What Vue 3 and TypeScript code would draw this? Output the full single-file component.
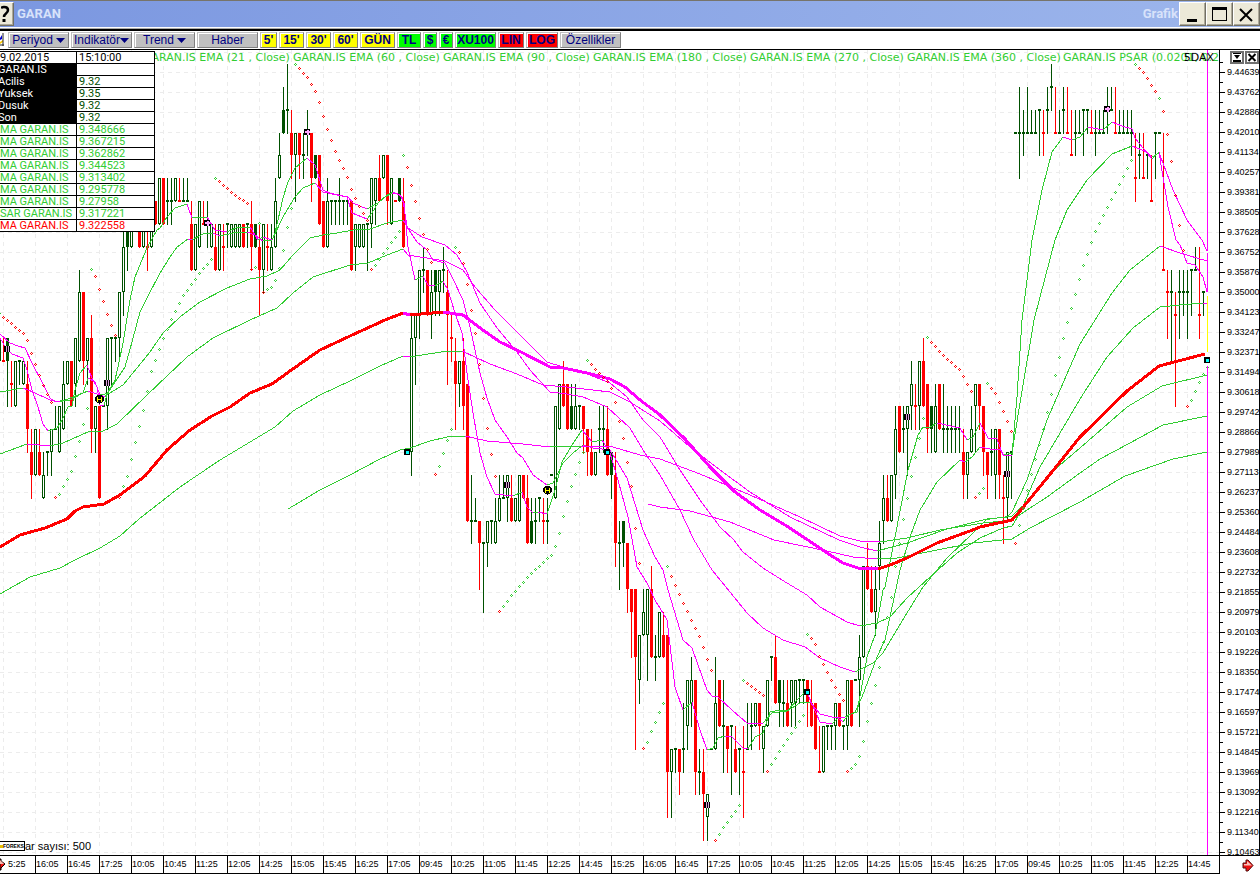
<script setup lang="ts">
type Pt = [number, number]
interface Candle { x: number; kind: string; high: number; top: number; bottom: number; low: number }
interface Dot { x: number; y: number; up: boolean }

const priceY = (p: number): number => Math.round(132.6 + (42 - p) * 22.82)

// Each token is a candle: kind, then high/top/bottom/low (8 digits) or high/close/low (6 digits).
// g hollow, G filled, r falling, d flat rising, e flat falling, "-" empty slot.
const candleData = `
g33333232 e333232 G33333230 e323130 g32323030 d323231 g32323131 r32312928 r29282726 g29292727 r29282727 g28272626
d282827 g29292827 d302929 g30302828 g32312929 g32323131 r32323030 g33333130 g36353232 r35353231 g33333231 r34332928
g30302928 r30302626 d303030 g33333029 d333331 d333332 g35353332 g38373534 G38383736 g38383737 d383838 r38383737
g38383737 e383736 g38383737 r39393838 g40403838 r40403838 d403938 d403938 g40403939 e403939 d403939 d403939
r39383636 g38383636 g39393737 e393838 d393837 g38383737 r38373636 g38383636 e383736 d383837 g38383737 g38383737
g38383737 r38383737 d383837 r39383736 G38383737 r38373634 g38383635 e383736 g38373636 g40393737 g42414040 G44434242
d454342 r43424140 g42424139 r42424140 d424140 d434241 r42424039 G41414040 r41413838 r39393737 g40393737 d393938
d393938 d403938 d393938 d393938 r39393636 g38383736 g38383737 g38383737 d383836 g40403837 g40403938 r41403939
g41414040 r41413938 g40403838 e393939 G40403939 r40393737 - g34332827 g34343331 g36363433 d373635 r36363434
g36353433 G36363534 g36363534 d373635 r36353431 e343332 r33323129 g32323130 r33323029 r31312525 d272524 d262525
r25252422 d242421 g25252423 d252524 g26252424 g27262525 d272626 g27272625 r27262525 g26262525 g27272525 r27272626
r27262424 G26252424 d262524 d262625 e262524 d262524 d272727 g30302626 g31312929 r32313030 r31312929 G31302929
g31302929 d303029 r30302928 r29292827 r29282727 g28282727 d302928 d302928 r30292727 G28282726 r28272423 d252422
G25252423 r24242221 r22222119 r22221915 g20201817 g22212020 g22222018 r23221919 d201918 g21211919 r21201919 r20201412
g15151412 d151514 r15151413 d171514 g18181615 g19181716 r18181413 d151413 r15141311 g13131211 d151515 g19171515
r18181616 d181614 r16161514 d161613 r16151414 d151513 e161412 d171515 d171615 g17171616 r17171615 g16161514
g18181616 d191918 r20191717 G18181716 d181716 r18171616 g18181716 g18181716 d181817 d181817 r18181716 r18171616
r17171515 e161414 g16161414 d161615 d161615 g17171615 r17171616 d161615 g18181615 r18181616 d181818 g20191816
g23231919 r24232222 r23222121 g23222120 g25242322 g27262524 r27262525 g27272525 g30292726 r30302828 d302928 g30302927
g32313029 e313029 g32323029 r33323030 r31312928 G30302928 g31302828 r31312929 d312928 d302928 d302928 d302928
d302928 r29282726 g28282726 g30292828 g31313028 r31313029 r30302827 r28282726 d292827 g29292726 r29292726 e272624
g28282625 d282826 d424242 d444240 d434241 d444242 d434242 d434242 d434341 e434241 d444342 d454443 e444242 d434242
d444342 e444242 e434141 d434241 d434242 d434341 d434342 e434242 d434241 d434242 d434242 d444342 d444343 e444242
d434242 d434242 d434242 d434241 e424039 d424140 e424040 d414140 e413939 d424240 d424242 e423636 e363533 d363532
e353430 d363533 d363534 d363533 d363634 d373636 e373433 d353534`

const candles: Candle[] = candleData.trim().split(/\s+/).flatMap((t, i) => {
  if (t === '-') return []
  const n = (t.slice(1).match(/\d\d/g) ?? []).map(Number)
  const flat = n.length === 3
  return [{
    x: 4 * i - 1, kind: t[0],
    high: priceY(n[0]), top: priceY(n[1]),
    bottom: priceY(flat ? n[1] : n[2]), low: priceY(flat ? n[2] : n[3]),
  }]
})

const parse = (s: string): Pt[] => s.trim().split(/\s+/).map(p => p.split(',').map(Number) as Pt)

const averages: string[] = [
  // 8
  `0,338 6,348 12,354 23,358 27,370 32,390 38,407 43,424 48,431 57,428 62,420 68,407 72,406 75,390 80,373 87,365 92,378 97,387 100,405 104,405 108,392 115,380 118,367 123,343 130,300 135,277 142,260 147,248 157,230 160,228 167,217 175,208 187,204 192,218 207,217 215,230 227,232 238,227 250,227 258,240 263,237 272,240 275,233 283,198 288,182 295,168 307,158 315,165 323,190 330,193 347,197 352,213 367,219 372,213 378,203 387,195 393,192 400,195 404,203 408,247 415,280 423,276 428,285 435,286 443,281 448,290 455,313 462,333 467,373 473,413 480,453 487,477 495,494 513,496 522,492 527,507 533,513 538,512 547,514 555,490 562,462 572,445 582,430 592,442 602,440 610,453 618,480 628,517 637,567 647,583 656,602 660,608 667,620 675,687 683,710 692,702 700,730 707,750 713,748 718,738 725,736 732,737 743,748 748,749 755,737 763,733 770,712 780,710 788,710 797,700 804,693 808,695 820,722 832,724 838,718 843,722 848,715 857,712 863,680 867,657 875,635 883,590 885,587 895,537 908,470 918,435 923,427 930,427 937,423 960,428 967,440 973,437 980,423 988,438 997,439 1003,455 1012,455 1017,397 1022,320 1032,240 1042,190 1052,152 1063,137 1072,140 1080,137 1088,127 1103,130 1112,122 1122,126 1132,129 1135,138 1143,148 1152,159 1159,152 1163,177 1168,207 1176,240 1180,245 1187,263 1195,265 1203,277 1207,292`,
  // 21
  `0,334 10,343 18,346 25,348 33,365 42,382 50,398 55,402 60,401 70,400 83,393 88,378 95,382 100,395 105,397 113,385 125,367 132,342 140,312 147,298 160,273 170,257 177,247 188,239 192,240 203,234 213,233 220,236 233,233 247,232 255,235 263,241 272,240 283,217 295,197 303,188 315,183 323,192 337,195 348,197 353,203 367,209 378,203 385,197 392,193 397,194 402,197 404,207 407,227 417,242 427,250 433,260 445,263 452,277 463,300 470,327 480,373 487,398 495,420 507,437 517,453 523,458 533,475 547,485 553,483 563,463 573,453 583,445 593,448 610,450 627,478 643,530 655,557 663,570 668,590 683,640 692,648 707,690 712,696 718,697 733,711 747,723 763,723 772,713 787,711 800,703 810,702 820,714 832,717 845,717 855,712 862,697 877,657 885,640 900,570 910,537 920,510 937,482 960,460 965,462 972,457 980,447 990,449 1000,450 1004,455 1012,453 1020,403 1034,320 1055,240 1067,210 1087,180 1112,154 1132,146 1147,152 1152,157 1159,153 1163,163 1173,190 1187,220 1202,240 1207,251`,
  // 60
  `0,392 23,388 33,392 50,400 60,402 73,397 88,391 100,395 110,393 123,385 137,368 150,352 163,333 180,317 200,302 227,288 250,279 267,276 280,270 293,255 310,238 323,235 337,233 353,230 370,229 387,223 403,220 408,228 422,237 445,245 457,255 467,272 480,303 497,328 517,352 530,370 550,392 567,394 583,397 607,407 630,428 643,450 660,475 680,510 694,540 712,570 730,592 747,613 763,628 783,640 805,647 820,658 840,667 855,672 873,663 883,653 907,613 923,587 947,558 973,533 987,519 1007,517 1012,512 1027,480 1047,420 1080,344 1112,293 1130,270 1160,246 1180,253 1207,261`,
  // 90
  `0,454 27,444 50,446 63,443 90,431 103,431 117,424 147,395 187,357 213,338 250,320 277,308 293,293 313,277 350,265 368,263 387,255 403,249 408,255 445,261 463,270 475,287 495,310 523,338 547,362 563,367 580,371 610,383 627,397 643,420 660,437 680,470 700,500 720,527 734,540 743,552 763,568 782,580 807,595 820,607 847,622 860,626 877,623 890,617 907,598 930,577 957,553 980,538 1003,528 1012,526 1020,513 1040,467 1060,433 1080,399 1107,357 1133,328 1160,307 1180,305 1203,303 1207,304`,
  // 180
  `0,594 30,577 60,568 75,560 100,548 120,536 139,519 180,487 220,460 250,442 275,427 293,411 320,395 350,381 380,366 403,356 410,357 447,351 462,351 490,364 517,374 543,385 567,387 610,392 630,402 660,421 690,447 720,470 750,492 790,517 839,540 860,547 877,551 907,543 947,529 983,520 1012,516 1027,502 1047,478 1060,465 1080,448 1127,407 1162,386 1207,375`,
  // 270
  `288,509 320,490 350,475 380,459 400,450 410,448 430,441 447,437 465,436 487,441 523,444 550,447 580,446 613,447 640,455 660,459 700,474 750,495 800,517 840,536 860,541 880,542 907,538 940,530 983,523 1012,520 1027,510 1047,497 1080,473 1100,459 1130,443 1163,425 1207,416`,
  // 360
  `648,504 660,507 690,511 730,522 774,540 827,551 853,557 877,559 897,558 927,552 973,543 1012,539 1030,528 1080,502 1125,476 1173,459 1207,452`,
]
const thickAverage = `0,547 20,535 45,528 67,519 75,511 83,507 104,504 120,495 145,476 167,450 190,430 212,416 230,407 250,393 272,384 290,371 320,350 350,336 385,320 403,313 410,315 443,312 463,315 480,328 500,342 523,353 550,367 563,368 587,373 610,379 625,387 640,400 660,415 685,439 710,467 735,492 760,510 785,525 808,540 827,553 843,563 858,568 878,569 890,565 907,558 937,543 970,531 980,527 1012,520 1020,511 1047,478 1080,437 1127,391 1159,366 1205,354`

interface Stroke { d: string; up: boolean }
const strokesOf = (pts: Pt[]): Stroke[] => {
  const out: Stroke[] = []
  for (let i = 1; i < pts.length; i++) {
    const a = pts[i - 1], b = pts[i]
    const last = out[out.length - 1]
    const up = b[1] === a[1] && last ? last.up : b[1] <= a[1]
    if (last && last.up === up) last.d += ` L${b[0]} ${b[1]}`
    else out.push({ up, d: `M${a[0]} ${a[1]} L${b[0]} ${b[1]}` })
  }
  return out
}
const thin: Stroke[] = averages.flatMap(s => strokesOf(parse(s)))
const thick: Stroke[] = strokesOf(parse(thickAverage))

// Parabolic SAR runs; "U" runs above the price, "L" runs below it.
const sarRuns: string[] = [
  'U -1,313 3,317 23,333 27,340 31,353 39,375 47,394 51,402',
  'L 55,497 59,494 71,471 79,441 83,424 87,408',
  'U 91,269 95,276 107,314 115,335',
  'L 119,497 123,486 127,476 135,442 143,410 151,371 163,338 171,319 183,295 203,268 211,259',
  'U 215,178 219,181 235,195 247,203',
  'L 251,269 255,267',
  'U 259,223',
  'L 263,292 267,289 271,287 275,280 279,268 283,250 287,227 291,208',
  'U 295,64 307,77 315,91 319,102 327,129 335,151 347,177 351,189 359,206 367,220',
  'L 371,269 375,265 383,253 391,242 399,231',
  'U 403,155 407,167 411,185 423,234 427,249 431,262',
  'L 435,474 439,466 443,453 447,440 451,429',
  'U 455,247 459,252 463,263 467,284 471,310 475,333 479,364 483,398 487,428 491,454 495,476',
  'L 499,611 503,606 511,595 527,577 547,558 551,555 555,546 559,533 563,516 571,486 579,462 583,452',
  'U 587,360 599,373 607,381 611,388 615,402 619,421 623,438 631,486 635,528 639,563',
  'L 643,748 647,742 651,731 659,712 663,703',
  'U 667,566 671,576 675,585 683,603 699,636 711,670',
  'L 715,840 723,827 739,805',
  'U 743,680 763,695',
  'L 767,771 779,751 803,715',
  'U 807,634 811,638 815,644 819,656 831,680 839,694 843,700',
  'L 847,771 855,764 859,756 863,741 867,721 871,703 879,667 887,617 891,597 895,566 903,519 911,476 919,438 923,418',
  'U 927,337 931,342 943,355 959,369 971,391',
  'L 975,497 979,493 983,488',
  'U 987,383 995,393 1003,411 1011,431',
  'L 1015,543 1019,525 1027,490 1031,474 1043,429 1051,394 1063,338 1067,322 1083,265 1095,231 1131,160',
  'U 1135,64 1143,72 1155,91 1159,98 1163,111 1167,134 1171,161 1175,195 1179,225 1183,250',
  'L 1187,406 1191,400 1199,382 1203,374 1207,367',
]
const dots: Dot[] = sarRuns.flatMap(run => {
  const upper = run[0] === 'U'
  const pts = parse(run.slice(2))
  const out: Dot[] = [{ x: pts[0][0], y: pts[0][1], up: upper }]
  for (let i = 1; i < pts.length; i++) {
    const [ax, ay] = pts[i - 1], [bx, by] = pts[i]
    for (let x = ax + 4; x <= bx; x += 4) {
      out.push({ x, y: Math.round(ay + ((by - ay) * (x - ax)) / (bx - ax)), up: !upper || x === 1159 })
    }
  }
  return out
})

const crossMarks: Pt[] = [[207, 223], [307, 132], [1107, 109]]
const barMarks: Pt[] = [[7, 349], [107, 383], [507, 485], [707, 805], [907, 417], [1007, 474]]
const cyanMarks: Pt[] = [[407, 452], [607, 452], [807, 692], [1207, 360]]
const holdMarks: Pt[] = [[99, 399], [547, 490]]

const gridX: number[] = Array.from({ length: 38 }, (_, i) => 3 + 32 * i)
const gridY: number[] = Array.from({ length: 41 }, (_, i) => 52 + 20 * i)

const prices: string[] = ('9.44639 9.43762 9.42886 9.42010 9.41134 9.40257 9.39381 9.38505 9.37628 9.36752 9.35876 9.35000 9.34123 ' +
  '9.33247 9.32371 9.31494 9.30618 9.29742 9.28866 9.27989 9.27113 9.26237 9.25360 9.24484 9.23608 9.22732 9.21855 9.20979 ' +
  '9.20103 9.19226 9.18350 9.17474 9.16597 9.15721 9.14845 9.13969 9.13092 9.12216 9.11340 9.10463').split(' ')
const times: string[] = ('5:25 16:05 16:45 17:25 10:05 10:45 11:25 12:05 14:25 15:05 15:45 16:25 17:05 09:45 10:25 11:05 11:45 12:25 ' +
  '14:45 15:25 16:05 16:45 17:25 10:05 10:45 11:25 12:05 14:25 15:05 15:45 16:25 17:05 09:45 10:25 11:05 11:45 12:25 14:45').split(' ')

const legend: string[] = ['GARAN.IS EMA (21 , Close)', 'GARAN.IS EMA (60 , Close)', 'GARAN.IS EMA (90 , Close)',
  'GARAN.IS EMA (180 , Close)', 'GARAN.IS EMA (270 , Close)', 'GARAN.IS EMA (360 , Close)', 'GARAN.IS PSAR (0.0201, 0.2']

const rows: { name: string; value: string; tone: string }[] = [
  { name: '9.02.2015', value: '15:10:00', tone: 'plain' },
  { name: 'GARAN.IS', value: '', tone: 'price' },
  { name: 'Acilis', value: '9.32', tone: 'price' },
  { name: 'Yuksek', value: '9.35', tone: 'price' },
  { name: 'Dusuk', value: '9.32', tone: 'price' },
  { name: 'Son', value: '9.32', tone: 'price' },
  { name: 'MA GARAN.IS', value: '9.348666', tone: 'lime' },
  { name: 'MA GARAN.IS', value: '9.367215', tone: 'lime' },
  { name: 'MA GARAN.IS', value: '9.362862', tone: 'lime' },
  { name: 'MA GARAN.IS', value: '9.344523', tone: 'lime' },
  { name: 'MA GARAN.IS', value: '9.313402', tone: 'lime' },
  { name: 'MA GARAN.IS', value: '9.295778', tone: 'lime' },
  { name: 'MA GARAN.IS', value: '9.27958', tone: 'lime' },
  { name: 'SAR GARAN.IS', value: '9.317221', tone: 'lime' },
  { name: 'MA GARAN.IS', value: '9.322558', tone: 'red' },
]

const tools: { label: string; cls: string; menu?: boolean }[] = [
  { label: 'Periyod', cls: 'wide', menu: true },
  { label: 'Indikatör', cls: 'wide tight', menu: true },
  { label: 'Trend', cls: 'wide', menu: true },
  { label: 'Haber', cls: 'wide' },
  { label: "5'", cls: 'yellow w17' },
  { label: "15'", cls: 'yellow w25' },
  { label: "30'", cls: 'yellow w25' },
  { label: "60'", cls: 'yellow w25' },
  { label: 'GÜN', cls: 'yellow w35' },
  { label: 'TL', cls: 'green w24' },
  { label: '$', cls: 'green w14' },
  { label: '€', cls: 'green w14' },
  { label: 'XU100', cls: 'green w41' },
  { label: 'LIN', cls: 'red w26' },
  { label: 'LOG', cls: 'red w32' },
  { label: 'Özellikler', cls: 'wide' },
]
</script>

<template>
  <div class="window">
    <header class="titlebar">
      <button class="winbtn help" aria-label="Yardım">
        <svg width="12" height="20" viewBox="0 0 12 20"><path d="M0 4q1-1 3-1 4 0 4 3 0 2-2 3.500T3 13" fill="none" stroke="#000" stroke-width="2.500" /><path d="M1.500 15h3v3h-3z" /></svg>
      </button>
      <h1>GARAN</h1>
      <span class="kind">Grafik</span>
      <button class="winbtn" aria-label="Küçült">
        <svg width="22" height="20" viewBox="0 0 22 20"><path d="M5 15h10v3H5z" /></svg>
      </button>
      <button class="winbtn" aria-label="Büyüt">
        <svg width="22" height="20" viewBox="0 0 22 20"><path d="M3 3h15v14H3zM4 6v10h13V6z" fill-rule="evenodd" /></svg>
      </button>
      <button class="winbtn" aria-label="Kapat">
        <svg width="22" height="20" viewBox="0 0 22 20"><path d="M4 5l12 12M16 5L4 17" stroke="#000" stroke-width="2" /></svg>
      </button>
    </header>

    <nav class="toolbar">
      <svg class="charticon" width="4" height="14" viewBox="0 0 4 14"><path d="M0 0h3v11H0z" fill="#fff" /><path d="M0 5l2-3v4L0 7z" fill="#00c" /><path d="M0 9l3-2v2l-3 2z" fill="#fc0" /><path d="M0 12h4M3 0v13" stroke="#222" /></svg>
      <button v-for="t in tools" :key="t.label" class="tool" :class="t.cls">
        <span>{{ t.label }}</span>
        <svg v-if="t.menu" width="9" height="5" viewBox="0 0 9 5"><path d="M0 0h9L4.500 5z" fill="#000080" /></svg>
      </button>
    </nav>

    <main class="board">
      <section class="plot">
        <svg class="canvas" viewBox="0 50 1219 805" preserveAspectRatio="none" role="img" aria-label="GARAN fiyat grafiği">
          <g stroke="#ececec" stroke-dasharray="4 4">
            <line v-for="x in gridX" :key="'v' + x" :x1="x + 0.5" :x2="x + 0.5" y1="50" y2="855" />
            <line v-for="y in gridY" :key="'h' + y" x1="0" x2="1219" :y1="y + 0.5" :y2="y + 0.5" />
          </g>
          <g v-for="c in candles" :key="c.x" :class="'c-' + c.kind">
            <rect :x="c.x" :y="c.high" width="1" :height="c.low - c.high + 1" />
            <rect v-if="c.kind === 'g'" class="hollow" :x="c.x - 0.5" :y="c.top + 0.5" width="2" :height="c.bottom - c.top - 1" />
            <rect v-else :x="c.x - 1" :y="c.top - (c.kind === 'd' || c.kind === 'e' ? 1 : 0)" width="3" :height="Math.max(c.bottom - c.top, 2)" />
          </g>
          <path v-for="(s, i) in thin" :key="'t' + i" :d="s.d" fill="none" :stroke="s.up ? '#32cd32' : '#ff00ff'" />
          <path v-for="(s, i) in thick" :key="'k' + i" :d="s.d" fill="none" stroke-width="3" :stroke="s.up ? '#ff0000' : '#ff00ff'" />
          <path v-for="(d, i) in dots" :key="'d' + i" :d="`M${d.x} ${d.y - 1}h1v1h1v1h-1v1h-1v-1h-1v-1h1z M${d.x} ${d.y}v1h1v-1z`" fill-rule="evenodd" :fill="d.up ? '#32cd32' : '#ff0000'" />
          <path d="M1207.500 50V251M1207.500 253V292M1207.500 366V855" stroke="#ff00ff" />
          <path d="M1207.500 296V352" stroke="#ffff00" />
          <g v-for="[x, y] in crossMarks" :key="'a' + x">
            <rect :x="x - 3" :y="y - 3" width="6" height="6" />
            <path :d="`M${x - 2} ${y}h5M${x + 0.5} ${y - 2}v5`" stroke="#ffa6ff" stroke-width="2" />
          </g>
          <g v-for="[x, y] in barMarks" :key="'b' + x">
            <rect :x="x - 3" :y="y - 3" width="6" height="6" />
            <path :d="`M${x - 0.5} ${y - 3}v6M${x + 1.5} ${y - 3}v6`" stroke="#dda0dd" />
          </g>
          <g v-for="[x, y] in cyanMarks" :key="'c' + x">
            <rect :x="x - 3" :y="y - 3" width="6" height="6" />
            <rect :x="x - 1" :y="y - 1" width="3" height="3" fill="#00ffff" />
          </g>
          <g v-for="[x, y] in holdMarks" :key="'h' + x">
            <circle :cx="x + 0.5" :cy="y" r="4.500" />
            <path :d="`M${x - 1.5} ${y - 2}v5M${x + 2.5} ${y - 2}v5M${x - 1} ${y + 0.5}h3`" stroke="#ffff00" />
          </g>
        </svg>

        <ul class="legend"><li v-for="l in legend" :key="l">{{ l }}</li></ul>
        <span class="overlap">5DAX</span>

        <table class="values">
          <tbody>
            <tr v-for="(r, i) in rows" :key="i" :class="r.tone">
              <th scope="row">{{ r.name }}</th>
              <td>{{ r.value }}</td>
            </tr>
          </tbody>
        </table>

        <div class="status">
          <span class="brand"><i></i>FOREKS</span>
          <span>ar sayısı: 500</span>
        </div>
      </section>

      <aside class="prices">
        <ol><li v-for="p in prices" :key="p">{{ p }}</li></ol>
        <div class="panebtns">
          <button aria-label="Daralt"><svg width="10" height="9" viewBox="0 0 10 9"><path d="M1 0h8v1H1zM2 2h6L5 6zM1 7h8v2H1z" /></svg></button>
          <button aria-label="Kapat"><svg width="10" height="9" viewBox="0 0 10 9"><path d="M1.500 1l7 7M8.500 1l-7 7" stroke="#000" stroke-width="2" /></svg></button>
        </div>
      </aside>

      <ol class="times">
        <li v-for="(t, i) in times" :key="i">{{ t }}</li>
      </ol>
      <svg class="arrow left" width="6" height="13" viewBox="0 0 6 13"><path d="M0 1h1v2l4 3-4 4v2H0z" fill="#f01010" stroke="#000" /><path d="M0 2l4 4H0z" fill="#f9b8b0" /></svg>
      <div class="corner">
        <svg width="12" height="13" viewBox="0 0 12 13"><path d="M1 4h3V1h2l5 5.500L6 12H4V9H1z" fill="#f01010" stroke="#501010" /><path d="M2 5h3V2l5 4.500H2z" fill="#f9c0b8" /></svg>
      </div>
    </main>
  </div>
</template>

<style>
body { margin: 0; background: #fff; }
</style>

<style scoped>
.window {
  display: flex; flex-direction: column; height: 100vh; min-height: 400px; overflow: hidden;
  font-family: "Liberation Sans", Arial, sans-serif; font-size: 11px; color: #000; background: #fff;
}
button { font-family: inherit; padding: 0; margin: 0; }
ul, ol { list-style: none; margin: 0; padding: 0; }

.titlebar {
  display: flex; align-items: center; flex: none; height: 26px; box-sizing: content-box;
  border-top: 1px solid #77746a; border-bottom: 1px solid #fff;
  background: linear-gradient(90deg, #7b97e0, #9db6ec);
}
h1, .kind { font-family: Roboto, sans-serif; font-size: 13px; font-weight: 700; line-height: 16px; color: #d8e2fa; margin: 0; }
h1 { padding-left: 3px; flex: 1; }
.kind { padding-right: 1px; }
.winbtn {
  width: 27px; height: 24px; box-sizing: border-box; display: flex; align-items: center; justify-content: center;
  background: #ece9d8; border: 1px solid; border-color: #fff #716f64 #716f64 #fff; box-shadow: inset -1px -1px #aca899; overflow: hidden;
}
.winbtn.help { width: 14px; border-left: 0; }
.winbtn svg { flex: none; }

.toolbar {
  display: flex; align-items: center; flex: none; gap: 2px; height: 18px; margin-top: 1px;
  border-top: 2px solid #000; border-bottom: 1px solid #000; background: #fff; box-shadow: 0 -1px #aaa;
}
.charticon { flex: none; margin-right: 2px; }
.tool {
  display: flex; align-items: center; justify-content: center; gap: 3px; box-sizing: border-box; height: 16px;
  border: 1px solid; border-color: #c0c0c0 #808080 #808080 #c0c0c0; box-shadow: inset 1px 1px #fff;
  background: #c0c0c0; color: #000080; font-size: 12px; line-height: 14px; overflow: hidden; white-space: nowrap;
}
.tool svg { flex: none; }
.wide { width: 61px; }
.tight { gap: 0; }
.yellow, .green, .red.tool { font-weight: 700; }
.yellow { background: #ffff00; }
.green { background: #00ff00; }
.red.tool { background: #ff0000; }
.w14 { width: 14px; } .w17 { width: 17px; } .w24 { width: 24px; } .w25 { width: 25px; }
.w26 { width: 26px; } .w32 { width: 32px; } .w35 { width: 35px; } .w41 { width: 41px; }

.board { position: relative; flex: 1; min-height: 0; display: grid; grid-template-columns: minmax(0, 1fr) 41px; grid-template-rows: minmax(0, 1fr) 19px; }
.plot { position: relative; overflow: hidden; }
.canvas { display: block; width: 100%; height: 100%; shape-rendering: crispEdges; }
.c-g rect, .c-G rect, .c-d rect { fill: #005000; }
.c-r rect, .c-e rect { fill: #ff0000; }
.c-g rect.hollow { fill: #fff; stroke: #005000; }

.legend {
  position: absolute; top: 1px; left: 143px; display: grid; grid-template-columns: 150px 150px 150px 157px 157px 156px 157px;
  font-family: "DejaVu Sans", sans-serif; font-size: 11px; line-height: 13px; color: #32cd32; white-space: nowrap;
}
.overlap { position: absolute; top: 1px; right: 5px; font-family: "DejaVu Sans", sans-serif; font-size: 11px; line-height: 13px; }

.values { position: absolute; top: 1px; left: 0; width: 155px; table-layout: fixed; border-collapse: collapse; background: #fff; }
.values th, .values td { height: 11px; padding: 0; border: 1px solid #000; font-family: Roboto, sans-serif; line-height: 11px; font-size: 11px; font-weight: 400; text-align: left; white-space: nowrap; overflow: hidden; }
.values th { width: 76px; border-left: 0; }
.values td { padding-left: 2px; }
.price th { background: #000; color: #fff; text-indent: -2px; }
.price td { color: #005000; }
.lime { color: #32cd32; }
tr.red { color: #ff0000; }

.status { position: absolute; left: 0; bottom: 3px; display: flex; align-items: center; line-height: 12px; }
.brand { display: flex; align-items: center; box-sizing: border-box; width: 25px; height: 10px; border: 1px solid #000; border-left: 0; background: #fff; font-size: 5px; font-weight: 700; line-height: 8px; overflow: hidden; }
.brand i { width: 3px; height: 3px; background: #e8c000; }

.prices { position: relative; overflow: hidden; border-left: 1px solid #000; border-right: 1px solid #000; }
.prices ol { display: flex; flex-direction: column; box-sizing: border-box; height: calc(100% + 7px); padding-top: 12px; }
.prices li {
  position: relative; flex: 1; display: flex; align-items: center; min-height: 0; padding-left: 7px;
  font-size: 9px; line-height: 12px;
}
.prices li::before { content: ""; position: absolute; left: 0; top: 50%; width: 5px; height: 1px; background: #000; }
.prices li::after { content: ""; position: absolute; left: 0; top: 0; width: 3px; height: 1px; background: #000; }
.panebtns { position: absolute; top: 1px; right: 0; display: flex; gap: 1px; background: #fff; }
.panebtns button { width: 14px; height: 13px; box-sizing: border-box; display: flex; align-items: center; justify-content: center; border: 2px solid #707070; background: #fff; }
.panebtns svg { flex: none; }

.times { display: grid; grid-template-columns: minmax(0, 35fr) repeat(37, minmax(0, 32fr)); box-sizing: border-box; border: solid #000; border-width: 1px 0; box-shadow: 1px 0 #000; }
.times li { box-sizing: border-box; border-left: 1px solid #000; line-height: 17px; font-size: 9px; white-space: nowrap; overflow: hidden; }
.times li:first-child { border-left: 0; padding-left: 8px; }
.corner { display: flex; align-items: center; justify-content: center; padding-left: 17px; border-top: 1px solid #000; }
.arrow.left { position: absolute; left: 0; bottom: 3px; }
</style>
